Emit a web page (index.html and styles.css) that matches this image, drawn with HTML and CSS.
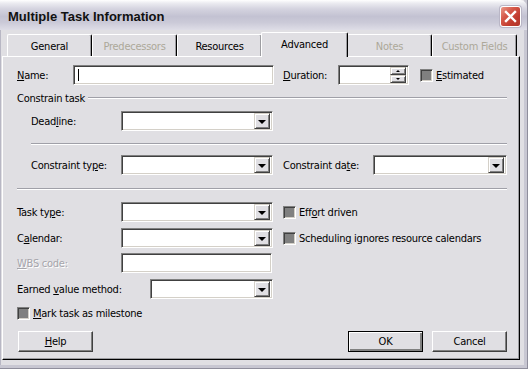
FILE: index.html
```html
<!DOCTYPE html>
<html lang="en">
<head>
    <meta charset="UTF-8">
    <title>Multiple Task Information</title>
    <link rel="stylesheet" href="styles.css">
</head>
<body>
<div class="window">
    <div class="titlebar">
        <span class="title">Multiple Task Information</span>
        <span class="close">
            <svg width="13" height="13" viewBox="0 0 13 13">
                <path d="M2 2 L11 11 M11 2 L2 11" stroke="#fff" stroke-width="2.4" stroke-linecap="square"/>
            </svg>
        </span>
    </div>

    <div class="tabs">
        <div class="tab">General</div>
        <div class="tab disabled">Predecessors</div>
        <div class="tab">Resources</div>
        <div class="tab active">Advanced</div>
        <div class="tab disabled">Notes</div>
        <div class="tab disabled">Custom Fields</div>
    </div>

    <div class="panel">
        <div class="row row-name">
            <label class="lbl w-name"><u>N</u>ame:</label>
            <div class="field w-201"><span class="caret"></span></div>
            <label class="lbl w-duration ml-9"><u>D</u>uration:</label>
            <div class="field w-71 spin-field">
                <div class="spin">
                    <span class="spin-btn"><i class="tri-up"></i></span>
                    <span class="spin-btn"><i class="tri-down small"></i></span>
                </div>
            </div>
            <span class="check ml-11"></span>
            <label class="check-lbl"><u>E</u>stimated</label>
        </div>

        <div class="group">
            <span>Constrain task</span>
            <span class="group-line"></span>
        </div>

        <div class="row row-deadline indent">
            <label class="lbl w-90">Dead<u>l</u>ine:</label>
            <div class="field combo w-152"><span class="drop"><i class="tri-down"></i></span></div>
        </div>

        <div class="sep sep-1"></div>

        <div class="row row-constraint indent">
            <label class="lbl w-90">Constraint ty<u>p</u>e:</label>
            <div class="field combo w-152"><span class="drop"><i class="tri-down"></i></span></div>
            <label class="lbl w-90 ml-10">Constraint da<u>t</u>e:</label>
            <div class="field combo w-134"><span class="drop"><i class="tri-down"></i></span></div>
        </div>

        <div class="sep sep-2"></div>

        <div class="row row-task">
            <label class="lbl w-104">Task ty<u>p</u>e:</label>
            <div class="field combo w-152"><span class="drop"><i class="tri-down"></i></span></div>
            <span class="check ml-10"></span>
            <label class="check-lbl">Eff<u>o</u>rt driven</label>
        </div>

        <div class="row row-calendar">
            <label class="lbl w-104">C<u>a</u>lendar:</label>
            <div class="field combo w-152"><span class="drop"><i class="tri-down"></i></span></div>
            <span class="check ml-10"></span>
            <label class="check-lbl">Schedulin<u>g</u> ignores resource calendars</label>
        </div>

        <div class="row row-wbs">
            <label class="lbl w-104 disabled-lbl"><u>W</u>BS code:</label>
            <div class="field w-151"></div>
        </div>

        <div class="row row-earned">
            <label class="lbl w-133">Earned <u>v</u>alue method:</label>
            <div class="field combo w-123"><span class="drop"><i class="tri-down"></i></span></div>
        </div>

        <div class="row row-milestone">
            <span class="check"></span>
            <label class="check-lbl"><u>M</u>ark task as milestone</label>
        </div>

        <div class="buttons">
            <button class="btn btn-help"><u>H</u>elp</button>
            <span class="spacer"></span>
            <button class="btn default">OK</button>
            <button class="btn">Cancel</button>
        </div>
    </div>
</div>
</body>
</html>
```

FILE: styles.css
```css
html, body {
    margin: 0;
    padding: 0;
}
body {
    width: 528px;
    height: 369px;
    overflow: hidden;
    background: #e0dfe3;
    font-family: "DejaVu Sans", "Liberation Sans", sans-serif;
    font-stretch: condensed;
    font-size: 11px;
    letter-spacing: -0.25px;
    color: #000;
}
.window {
    width: 528px;
    height: 369px;
    box-sizing: border-box;
    background: #e0dfe3;
    border-right: 1px solid #8f8e9c;
    border-bottom: 1px solid #8f8e9c;
    box-shadow: inset -3px -3px 0 #c8c7d2, inset 1px 0 0 #b8b7c4;
    position: relative;
}

/* title bar */
.titlebar {
    height: 30px;
    display: flex;
    align-items: center;
    padding-left: 8px;
    padding-right: 5px;
    background: linear-gradient(#ffffff 0%, #ececf1 10%, #d4d3df 30%, #c3c2d2 55%, #cbcad8 75%, #dedde7 100%);
    border-top-right-radius: 7px;
}
.title {
    flex: 1;
    font-family: "Liberation Sans", sans-serif;
    font-stretch: normal;
    letter-spacing: 0;
    font-weight: bold;
    font-size: 13px;
    color: #111;
    padding-top: 2px;
}
.close {
    width: 19px;
    height: 19px;
    margin-top: 2px;
    margin-right: 1px;
    display: flex;
    align-items: center;
    justify-content: center;
    border: 1px solid #fff;
    border-radius: 3px;
    background: linear-gradient(135deg, #e99a8a 0%, #d6594a 35%, #c03a2e 70%, #b0372e 100%);
    box-shadow: 0 0 0 1px #b9b6c6;
}

/* tabs */
.tabs {
    height: 26px;
    display: flex;
    align-items: flex-end;
    padding-left: 7px;
}
.tab {
    width: 85px;
    height: 22px;
    box-sizing: border-box;
    display: flex;
    align-items: center;
    justify-content: center;
    border-top: 1px solid #fff;
    border-left: 1px solid #fff;
    border-right: 1px solid #000;
    box-shadow: inset -1px 0 0 #9d9da1;
    border-top-left-radius: 2px;
    border-top-right-radius: 2px;
    padding-top: 1px;
}
.tab.disabled {
    color: #aca899;
}
.tab.active {
    height: 25px;
    margin-bottom: -1px;
    margin-left: -1px;
    margin-right: -1px;
    width: 87px;
    background: #e0dfe3;
    position: relative;
    z-index: 1;
    padding-bottom: 2px;
}

/* panel */
.panel {
    margin-left: 2px;
    width: 518px;
    height: 304px;
    box-sizing: border-box;
    border-top: 1px solid #fff;
    border-left: 1px solid #fff;
    border-right: 1px solid #000;
    border-bottom: 1px solid #000;
    box-shadow: inset -1px -1px 0 #9d9da1;
    padding: 0 12px 0 14px;
    display: flex;
    flex-direction: column;
}

.row {
    display: flex;
    align-items: center;
    height: 20px;
    flex-shrink: 0;
}
.indent {
    padding-left: 14px;
}
.lbl {
    flex-shrink: 0;
    white-space: nowrap;
}
.disabled-lbl {
    color: #a6a5ab;
    text-shadow: 1px 1px 0 #fff;
}
.w-name { width: 56px; }
.w-duration { width: 55px; }
.w-90 { width: 90px; }
.w-104 { width: 104px; }
.w-133 { width: 133px; }
.w-201 { width: 201px; }
.w-71 { width: 71px; }
.w-152 { width: 152px; }
.w-151 { width: 151px; }
.w-134 { width: 134px; }
.w-123 { width: 123px; }
.ml-9 { margin-left: 9px; }
.ml-10 { margin-left: 10px; }
.ml-11 { margin-left: 11px; }

/* vertical rhythm */
.row-name { margin-top: 8px; }
.group { margin-top: 6px; }
.row-deadline { margin-top: 6px; }
.sep-1 { margin-top: 12px; margin-left: 14px; }
.row-constraint { margin-top: 10px; }
.sep-2 { margin-top: 13px; }
.row-task { margin-top: 12px; }
.row-calendar { margin-top: 6px; }
.row-wbs { margin-top: 5px; }
.row-earned { margin-top: 6px; }
.row-milestone { margin-top: 7px; height: 14px; }
.buttons { margin-top: 11px; }

/* sunken fields */
.field {
    height: 20px;
    box-sizing: border-box;
    flex-shrink: 0;
    background: #fff;
    border: 1px solid;
    border-color: #808080 #fff #fff #808080;
    box-shadow: inset 1px 1px 0 #404040, inset -1px -1px 0 #d4d0c8;
    display: flex;
    align-items: center;
    justify-content: flex-end;
    position: relative;
}
.caret {
    position: absolute;
    left: 4px;
    top: 3px;
    width: 1px;
    height: 12px;
    background: #000;
}
.drop, .spin-btn {
    box-sizing: border-box;
    background: #e0dfe3;
    border: 1px solid;
    border-color: #d4d0c8 #404040 #404040 #d4d0c8;
    box-shadow: inset 1px 1px 0 #fff, inset -1px -1px 0 #808080;
    display: flex;
    align-items: center;
    justify-content: center;
}
.drop {
    width: 16px;
    height: 16px;
    margin-right: 2px;
}
.spin {
    width: 16px;
    height: 16px;
    margin-right: 2px;
    display: flex;
    flex-direction: column;
}
.spin-btn {
    height: 8px;
}
.tri-down {
    width: 0;
    height: 0;
    border-left: 4px solid transparent;
    border-right: 4px solid transparent;
    border-top: 4px solid #000;
    margin-top: 1px;
}
.tri-down.small, .tri-up {
    border-left-width: 2px;
    border-right-width: 2px;
    border-top-width: 2px;
    margin-top: 0;
}
.tri-up {
    width: 0;
    height: 0;
    border-left: 2px solid transparent;
    border-right: 2px solid transparent;
    border-bottom: 2px solid #000;
    border-top: 0;
}

/* checkboxes (mixed state) */
.check {
    width: 13px;
    height: 13px;
    box-sizing: border-box;
    flex-shrink: 0;
    border: 1px solid;
    border-color: #808080 #fff #fff #808080;
    box-shadow: inset 1px 1px 0 #404040, inset -1px -1px 0 #d4d0c8;
    background: #808080;
}
.check-lbl {
    margin-left: 3px;
    white-space: nowrap;
}

/* groupbox label / separators */
.group {
    display: flex;
    align-items: center;
    height: 14px;
    flex-shrink: 0;
}
.group-line {
    flex: 1;
    margin-left: 3px;
    height: 0;
    border-top: 1px solid #a0a0a8;
    border-bottom: 1px solid #fff;
}
.sep {
    height: 0;
    flex-shrink: 0;
    border-top: 1px solid #a0a0a8;
    border-bottom: 1px solid #fff;
}

/* buttons */
.buttons {
    display: flex;
    height: 21px;
    flex-shrink: 0;
    padding-left: 1px;
}
.spacer {
    flex: 1;
}
.btn {
    width: 75px;
    height: 21px;
    box-sizing: border-box;
    padding: 0;
    margin-left: 9px;
    font: inherit;
    font-stretch: condensed;
    letter-spacing: -0.25px;
    color: #000;
    background: #e0dfe3;
    border: 1px solid;
    border-color: #fff #404040 #404040 #fff;
    box-shadow: inset -1px -1px 0 #808080;
}
.btn-help {
    margin-left: 0;
}
.btn.default {
    border: 1px solid #000;
    box-shadow: inset 1px 1px 0 #fff, inset -2px -2px 0 #808080, inset -1px -1px 0 #404040;
}
```
